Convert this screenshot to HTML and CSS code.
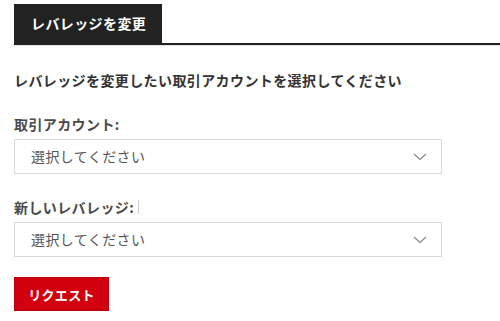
FILE: index.html
```html
<!DOCTYPE html>
<html lang="ja">
<head>
<meta charset="utf-8">
<link rel="stylesheet" href="styles.css">
</head>
<body>
<div class="tabs">
  <div class="tab">レバレッジを変更</div>
</div>
<form class="form">
  <h2 class="lead">レバレッジを変更したい取引アカウントを選択してください</h2>
  <div class="field">
    <label class="label">取引アカウント:</label>
    <div class="select">
      <span>選択してください</span>
      <svg class="chev" width="14" height="8" viewBox="0 0 14 8"><path d="M1 1 L7 6.5 L13 1" fill="none" stroke="#888" stroke-width="1.2"/></svg>
    </div>
  </div>
  <div class="field">
    <label class="label">新しいレバレッジ:<span class="caret"></span></label>
    <div class="select">
      <span>選択してください</span>
      <svg class="chev" width="14" height="8" viewBox="0 0 14 8"><path d="M1 1 L7 6.5 L13 1" fill="none" stroke="#888" stroke-width="1.2"/></svg>
    </div>
  </div>
  <button type="button" class="btn">リクエスト</button>
</form>
</body>
</html>
```
FILE: styles.css
```css
html, body {
  margin: 0;
  padding: 0;
  background: #fff;
}
body {
  font-family: "Noto Sans CJK JP", "Noto Sans", sans-serif;
  color: #333;
  letter-spacing: 0.4px;
}
.tabs {
  margin: 4px 0 0 14px;
  display: flex;
  border-bottom: 2px solid #222;
  box-shadow: 0 1px 0 #e2e2e2;
}
.tab {
  background: #222;
  color: #fff;
  font-weight: 700;
  font-size: 14px;
  height: 39px;
  line-height: 38px;
  padding: 0 16px 0 17px;
}
.form {
  padding: 0 0 0 14px;
  width: 428px;
}
.lead {
  margin: 25px 0 0;
  font-size: 14px;
  line-height: 20px;
  font-weight: 700;
  color: #333;
}
.field {
  display: flex;
  flex-direction: column;
}
.label {
  margin-top: 24px;
  font-size: 14px;
  line-height: 20px;
  font-weight: 700;
  color: #4a4a4a;
  display: flex;
  align-items: center;
}
.field + .field .label {
  margin-top: 23px;
}
.caret {
  display: inline-block;
  width: 1px;
  height: 14px;
  background: #ccc;
  margin-left: 4px;
}
.select {
  margin-top: 5px;
  height: 33px;
  border: 1px solid #d9d9d9;
  display: flex;
  align-items: center;
  justify-content: space-between;
  padding: 0 14px 0 16px;
  font-size: 14px;
  color: #555;
}
.select span {
  margin-top: -2px;
}
.chev {
  display: block;
  margin-top: 1px;
}
.btn {
  margin-top: 20px;
  width: 95px;
  height: 34px;
  background: #d2000f;
  border: 1px solid #c0000c;
  color: #fff;
  font-family: inherit;
  font-size: 13px;
  font-weight: 700;
  letter-spacing: 0.3px;
  padding: 0;
  display: block;
}
```
